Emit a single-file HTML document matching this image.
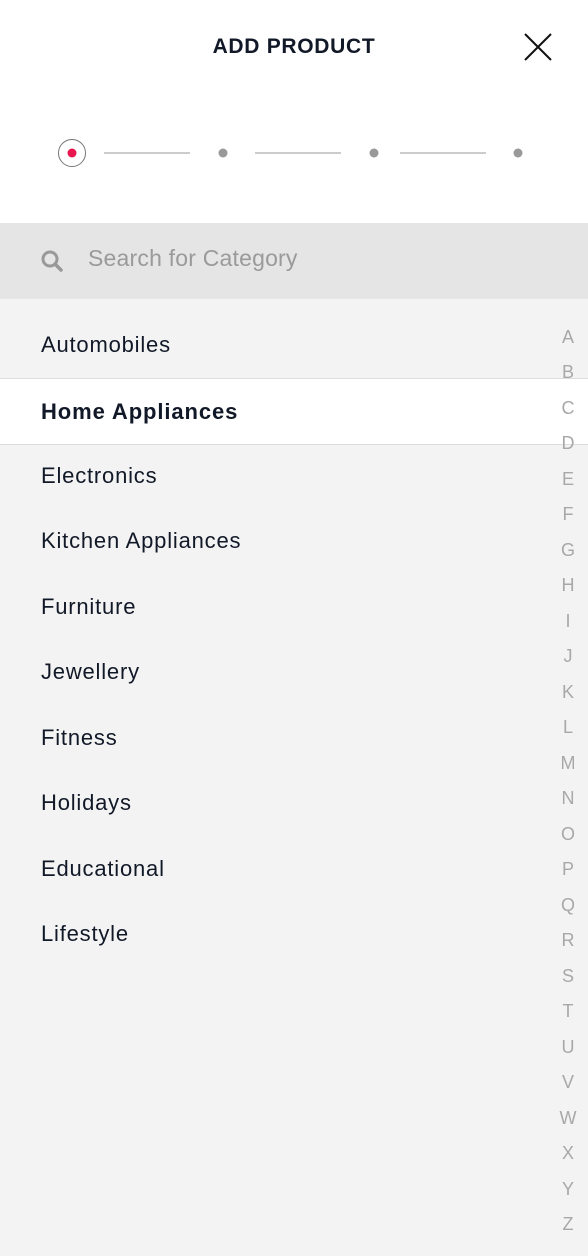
<!DOCTYPE html>
<html><head><style>
body{margin:0;width:588px;height:1256px;overflow:hidden;background:#f3f3f3;font-family:"Liberation Sans",sans-serif;position:relative}
.top{position:absolute;left:0;top:0;width:588px;height:223px;background:#fff}
.title{position:absolute;top:35px;width:588px;text-align:center;font-weight:bold;font-size:21px;color:#111827;letter-spacing:0.7px}
.search{position:absolute;top:223px;left:0;width:588px;height:76px;background:#e5e5e5}
.search span{position:absolute;left:88px;top:22px;font-size:23px;color:#9a9a9a;letter-spacing:0.2px}
.row{position:absolute;left:0;width:588px;height:65px;line-height:65px;font-size:22px;color:#111827;letter-spacing:0.8px}
.row span{position:absolute;left:41px}
.sel{background:#fff;border-top:1px solid #ddd;border-bottom:1px solid #ddd;font-weight:bold;letter-spacing:0.9px}
.idx{position:absolute;left:550px;width:36px;text-align:center;font-size:18px;color:#a8a8a8}
</style></head><body>
<div class="top">
<div class="title">ADD PRODUCT</div>
<svg style="position:absolute;left:524px;top:33px" width="28" height="28"><path d="M1 1L27 27M27 1L1 27" stroke="#111" stroke-width="2"/></svg>
<svg style="position:absolute;left:0;top:130px" width="588" height="46">
<circle cx="72" cy="23" r="13.5" fill="none" stroke="#777" stroke-width="1"/>
<circle cx="72" cy="23" r="4.5" fill="#e8174f"/>
<path d="M104 23H190M255 23H341M400 23H486" stroke="#bbb" stroke-width="1.5"/>
<circle cx="223" cy="23" r="4.5" fill="#999"/><circle cx="374" cy="23" r="4.5" fill="#999"/><circle cx="518" cy="23" r="4.5" fill="#999"/>
</svg>
</div>
<div class="search">
<svg style="position:absolute;left:40px;top:26px" width="24" height="24"><circle cx="10" cy="10" r="7" fill="none" stroke="#999" stroke-width="3"/><path d="M15 15L21 21" stroke="#999" stroke-width="3.5" stroke-linecap="round"/></svg>
<span>Search for Category</span></div>
<div class="row" style="top:312px"><span>Automobiles</span></div>
<div class="row sel" style="top:378px"><span>Home Appliances</span></div>
<div class="row" style="top:443px"><span>Electronics</span></div>
<div class="row" style="top:508px"><span>Kitchen Appliances</span></div>
<div class="row" style="top:574px"><span>Furniture</span></div>
<div class="row" style="top:639px"><span>Jewellery</span></div>
<div class="row" style="top:705px"><span>Fitness</span></div>
<div class="row" style="top:770px"><span>Holidays</span></div>
<div class="row" style="top:836px"><span>Educational</span></div>
<div class="row" style="top:901px"><span>Lifestyle</span></div>
<div class="idx" style="top:327px">A</div><div class="idx" style="top:362px">B</div><div class="idx" style="top:398px">C</div><div class="idx" style="top:433px">D</div><div class="idx" style="top:469px">E</div><div class="idx" style="top:504px">F</div><div class="idx" style="top:540px">G</div><div class="idx" style="top:575px">H</div><div class="idx" style="top:611px">I</div><div class="idx" style="top:646px">J</div><div class="idx" style="top:682px">K</div><div class="idx" style="top:717px">L</div><div class="idx" style="top:753px">M</div><div class="idx" style="top:788px">N</div><div class="idx" style="top:824px">O</div><div class="idx" style="top:859px">P</div><div class="idx" style="top:895px">Q</div><div class="idx" style="top:930px">R</div><div class="idx" style="top:966px">S</div><div class="idx" style="top:1001px">T</div><div class="idx" style="top:1037px">U</div><div class="idx" style="top:1072px">V</div><div class="idx" style="top:1108px">W</div><div class="idx" style="top:1143px">X</div><div class="idx" style="top:1179px">Y</div><div class="idx" style="top:1214px">Z</div>
</body></html>
